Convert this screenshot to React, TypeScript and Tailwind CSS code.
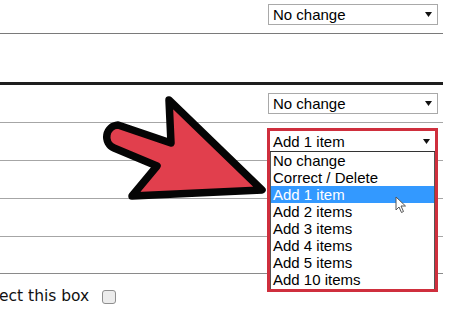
import React from "react";

const items = [
  "No change",
  "Correct / Delete",
  "Add 1 item",
  "Add 2 items",
  "Add 3 items",
  "Add 4 items",
  "Add 5 items",
  "Add 10 items",
];

function Caret() {
  return (
    <svg width="7" height="5" viewBox="0 0 7 5" className="shrink-0">
      <path d="M0 0 L7 0 L3.5 5 Z" fill="#111" />
    </svg>
  );
}

function FakeSelect({ value }: { value: string }) {
  return (
    <div className="w-[170px] h-[21px] border border-[#a9a9a9] bg-white flex items-center justify-between pl-[4px] pr-[5px] text-[15px] leading-[17px] text-black">
      <span>{value}</span>
      <Caret />
    </div>
  );
}

function Arrow() {
  return (
    <svg
      width="460"
      height="321"
      viewBox="0 0 460 321"
      className="absolute left-0 top-0 pointer-events-none"
    >
      <path
        d="M169 100 L262 190 L132 196 L157 166 L114 148 A12 12 0 0 1 118 125 L171 143 Z"
        fill="#e13f4d"
        stroke="#050505"
        strokeWidth="7.5"
        strokeLinejoin="round"
      />
    </svg>
  );
}

export default function App() {
  return (
    <div
      className="relative w-[460px] h-[321px] bg-white overflow-hidden"
      style={{ fontFamily: '"Liberation Sans", Arial, sans-serif' }}
    >
      <div className="w-[443px]">
        <div className="h-[34px] border-b border-[#7a7a7a] pl-[268px] pt-[4px]">
          <FakeSelect value="No change" />
        </div>
        <div className="h-[51px] border-b-[3px] border-[#1e1e1e]" />
        <div className="h-[38px] border-b border-[#a6a6a6] pl-[268px] pt-[8px]">
          <FakeSelect value="No change" />
        </div>
        <div className="h-[38px] border-b border-[#a6a6a6]" />
        <div className="h-[38px] border-b border-[#a6a6a6]" />
        <div className="h-[38px] border-b border-[#a6a6a6]" />
        <div className="h-[37px] border-b border-[#8a8a8a]" />
        <div
          className="h-[46px] flex items-center text-[15.5px] text-[#111]"
          style={{ fontFamily: '"DejaVu Sans", Verdana, sans-serif' }}
        >
          <span className="-ml-[1px]">ect this box</span>
          <span className="ml-[13px] w-[14px] h-[14px] rounded-[3px] border border-[#8f8f8f] bg-[#ececec]" />
        </div>
      </div>

      <Arrow />

      <div className="absolute left-[267px] top-[128px] w-[171px] border-[3px] border-[#cf2f3d] bg-white">
        <div className="h-[21px] border-b border-[#333] flex items-center justify-between pl-[3px] pr-[5px] text-[15px] leading-[17px] text-black">
          <span>Add 1 item</span>
          <Caret />
        </div>
        <div className="border-x border-[#555] pb-[1px]">
          {items.map((item) => (
            <div
              key={item}
              className={
                item === "Add 1 item"
                  ? "h-[17px] pl-[2px] text-[15px] leading-[17px] bg-[#3399ff] text-white"
                  : "h-[17px] pl-[2px] text-[15px] leading-[17px] text-black"
              }
            >
              {item}
            </div>
          ))}
        </div>
      </div>

      <svg
        width="12"
        height="18"
        viewBox="0 0 12 18"
        className="absolute left-[395px] top-[196px]"
      >
        <path
          d="M1 1 L1 14 L4 11 L6.5 16.5 L8.5 15.5 L6 10 L10.5 10 Z"
          fill="#fff"
          stroke="#555"
          strokeWidth="1"
          strokeLinejoin="round"
        />
      </svg>
    </div>
  );
}
